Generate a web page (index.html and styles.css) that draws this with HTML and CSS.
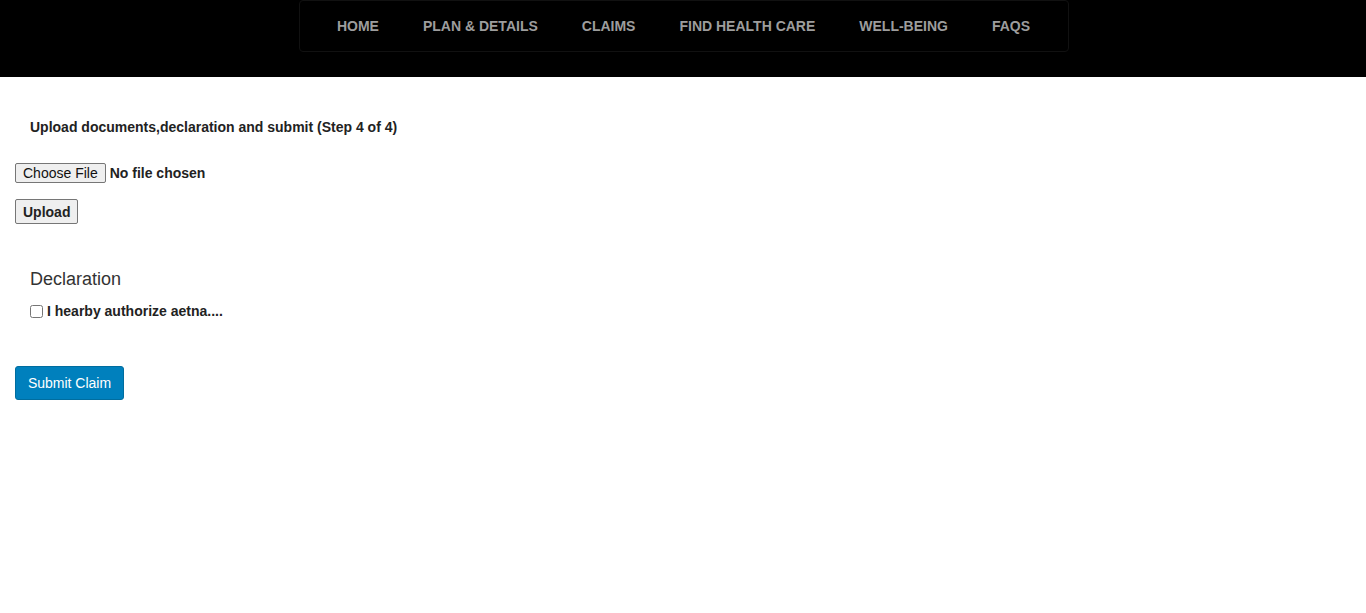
FILE: index.html
```html
<!DOCTYPE html>
<html>
<head>
<meta charset="utf-8">
<link rel="stylesheet" href="styles.css">
</head>
<body>
<header class="topbar">
  <nav class="nav">
    <a class="nav-link" href="#">HOME</a>
    <a class="nav-link" href="#">PLAN &amp; DETAILS</a>
    <a class="nav-link" href="#">CLAIMS</a>
    <a class="nav-link" href="#">FIND HEALTH CARE</a>
    <a class="nav-link" href="#">WELL-BEING</a>
    <a class="nav-link" href="#">FAQS</a>
  </nav>
</header>
<main class="content">
  <h5 class="step-title">Upload documents,declaration and submit (Step 4 of 4)</h5>
  <div class="file-row"><input class="file-input" type="file"></div>
  <div class="upload-row"><button class="btn-upload" type="button">Upload</button></div>
  <section class="declaration">
    <h4 class="decl-title">Declaration</h4>
    <label class="decl-label"><input class="decl-check" type="checkbox"> I hearby authorize aetna....</label>
  </section>
  <div class="submit-row"><button class="btn-submit" type="button">Submit Claim</button></div>
</main>
</body>
</html>
```
FILE: styles.css
```css
html, body {
  margin: 0;
  padding: 0;
  background: #fff;
  font-family: "Liberation Sans", Arial, sans-serif;
  color: #333;
}
.topbar {
  background: #000;
  height: 77px;
  display: flex;
  justify-content: center;
  align-items: flex-start;
}
.nav {
  display: flex;
  align-items: center;
  height: 50px;
  padding: 0 16px;
  border: 1px solid #111;
  border-radius: 4px;
  margin-top: 0;
  margin-left: 1px;
  width: 736px;
  box-sizing: content-box;
  justify-content: center;
  white-space: nowrap;
}
.nav-link {
  color: #9d9d9d;
  text-decoration: none;
  font-weight: bold;
  font-size: 14px;
  padding: 0 22px;
  line-height: 50px;
  white-space: nowrap;
}
.content {
  padding: 0 15px;
}
.step-title {
  margin: 0;
  padding: 42px 15px 0;
  font-size: 14px;
  line-height: 16px;
  font-weight: bold;
  color: #222;
}
.file-row {
  margin-top: 28px;
  height: 21px;
}
.file-input {
  font-family: "Liberation Sans", Arial, sans-serif;
  font-size: 14px;
  font-weight: bold;
  color: #222;
}
.file-input::file-selector-button {
  font-family: "Liberation Sans", Arial, sans-serif;
  font-size: 14px;
  font-weight: normal;
  color: #111;
  background: #efefef;
  border: 1px solid #767676;
  border-radius: 2px;
  padding: 1px 7px;
  margin-right: 4px;
}
.upload-row {
  margin-top: 15px;
}
.btn-upload {
  font-family: "Liberation Sans", Arial, sans-serif;
  font-size: 14px;
  font-weight: bold;
  color: #222;
  background: #efefef;
  border: 1px solid #767676;
  border-radius: 2px;
  padding: 2px 7px;
  height: 25px;
}
.declaration {
  padding: 0 15px;
  margin-top: 44px;
}
.decl-title {
  margin: 0;
  font-size: 18px;
  font-weight: normal;
  line-height: 22px;
  color: #333;
}
.decl-label {
  display: flex;
  align-items: center;
  margin-top: 13px;
  font-size: 14px;
  font-weight: bold;
  color: #222;
}
.decl-check {
  margin: 0 4px 0 0;
  width: 13px;
  height: 13px;
}
.submit-row {
  margin-top: 47px;
}
.btn-submit {
  font-family: "Liberation Sans", Arial, sans-serif;
  font-size: 14px;
  color: #fff;
  background: #0080bd;
  border: 1px solid #006d9f;
  border-radius: 3px;
  width: 109px;
  height: 34px;
  padding: 0;
}
```
